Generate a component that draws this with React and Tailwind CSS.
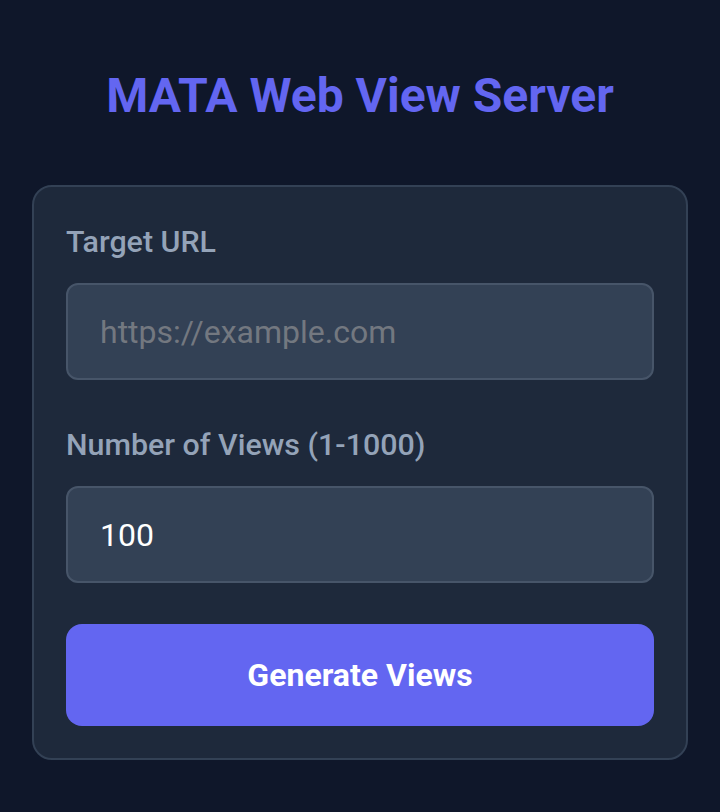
import React, { useState } from "react";

function App() {
    const [url, setUrl] = useState("");
    const [views, setViews] = useState("100");

    return (
        <div className="min-h-screen bg-[#0f172a] px-8 pt-[67px] pb-10 font-['Roboto',sans-serif]">
            <h1 className="text-center text-[48px] leading-[58px] font-bold text-[#6366f1]">
                MATA Web View Server
            </h1>

            <div className="mt-[60px] bg-[#1e293b] border-2 border-[#334155] rounded-[20px] p-8">
                <div className="mb-[42px]">
                    <label className="block text-[30.4px] leading-[45px] font-medium text-[#94a3b8] mb-[19px]">
                        Target URL
                    </label>
                    <input
                        type="text"
                        value={url}
                        onChange={(e) => setUrl(e.target.value)}
                        placeholder="https://example.com"
                        className="w-full h-[97px] px-8 bg-[#334155] border-2 border-[#475569] rounded-[12px] text-[32px] text-white placeholder:text-[#737880] outline-none"
                    />
                </div>

                <div className="mb-[41px]">
                    <label className="block text-[30.4px] leading-[45px] font-medium text-[#94a3b8] mb-[19px]">
                        Number of Views (1-1000)
                    </label>
                    <input
                        type="number"
                        value={views}
                        onChange={(e) => setViews(e.target.value)}
                        className="w-full h-[97px] px-8 bg-[#334155] border-2 border-[#475569] rounded-[12px] text-[32px] text-white outline-none"
                    />
                </div>

                <button className="w-full h-[102px] bg-[#6366f1] rounded-[16px] text-white text-[32px] font-bold">
                    Generate Views
                </button>
            </div>
        </div>
    );
}

export default App;
